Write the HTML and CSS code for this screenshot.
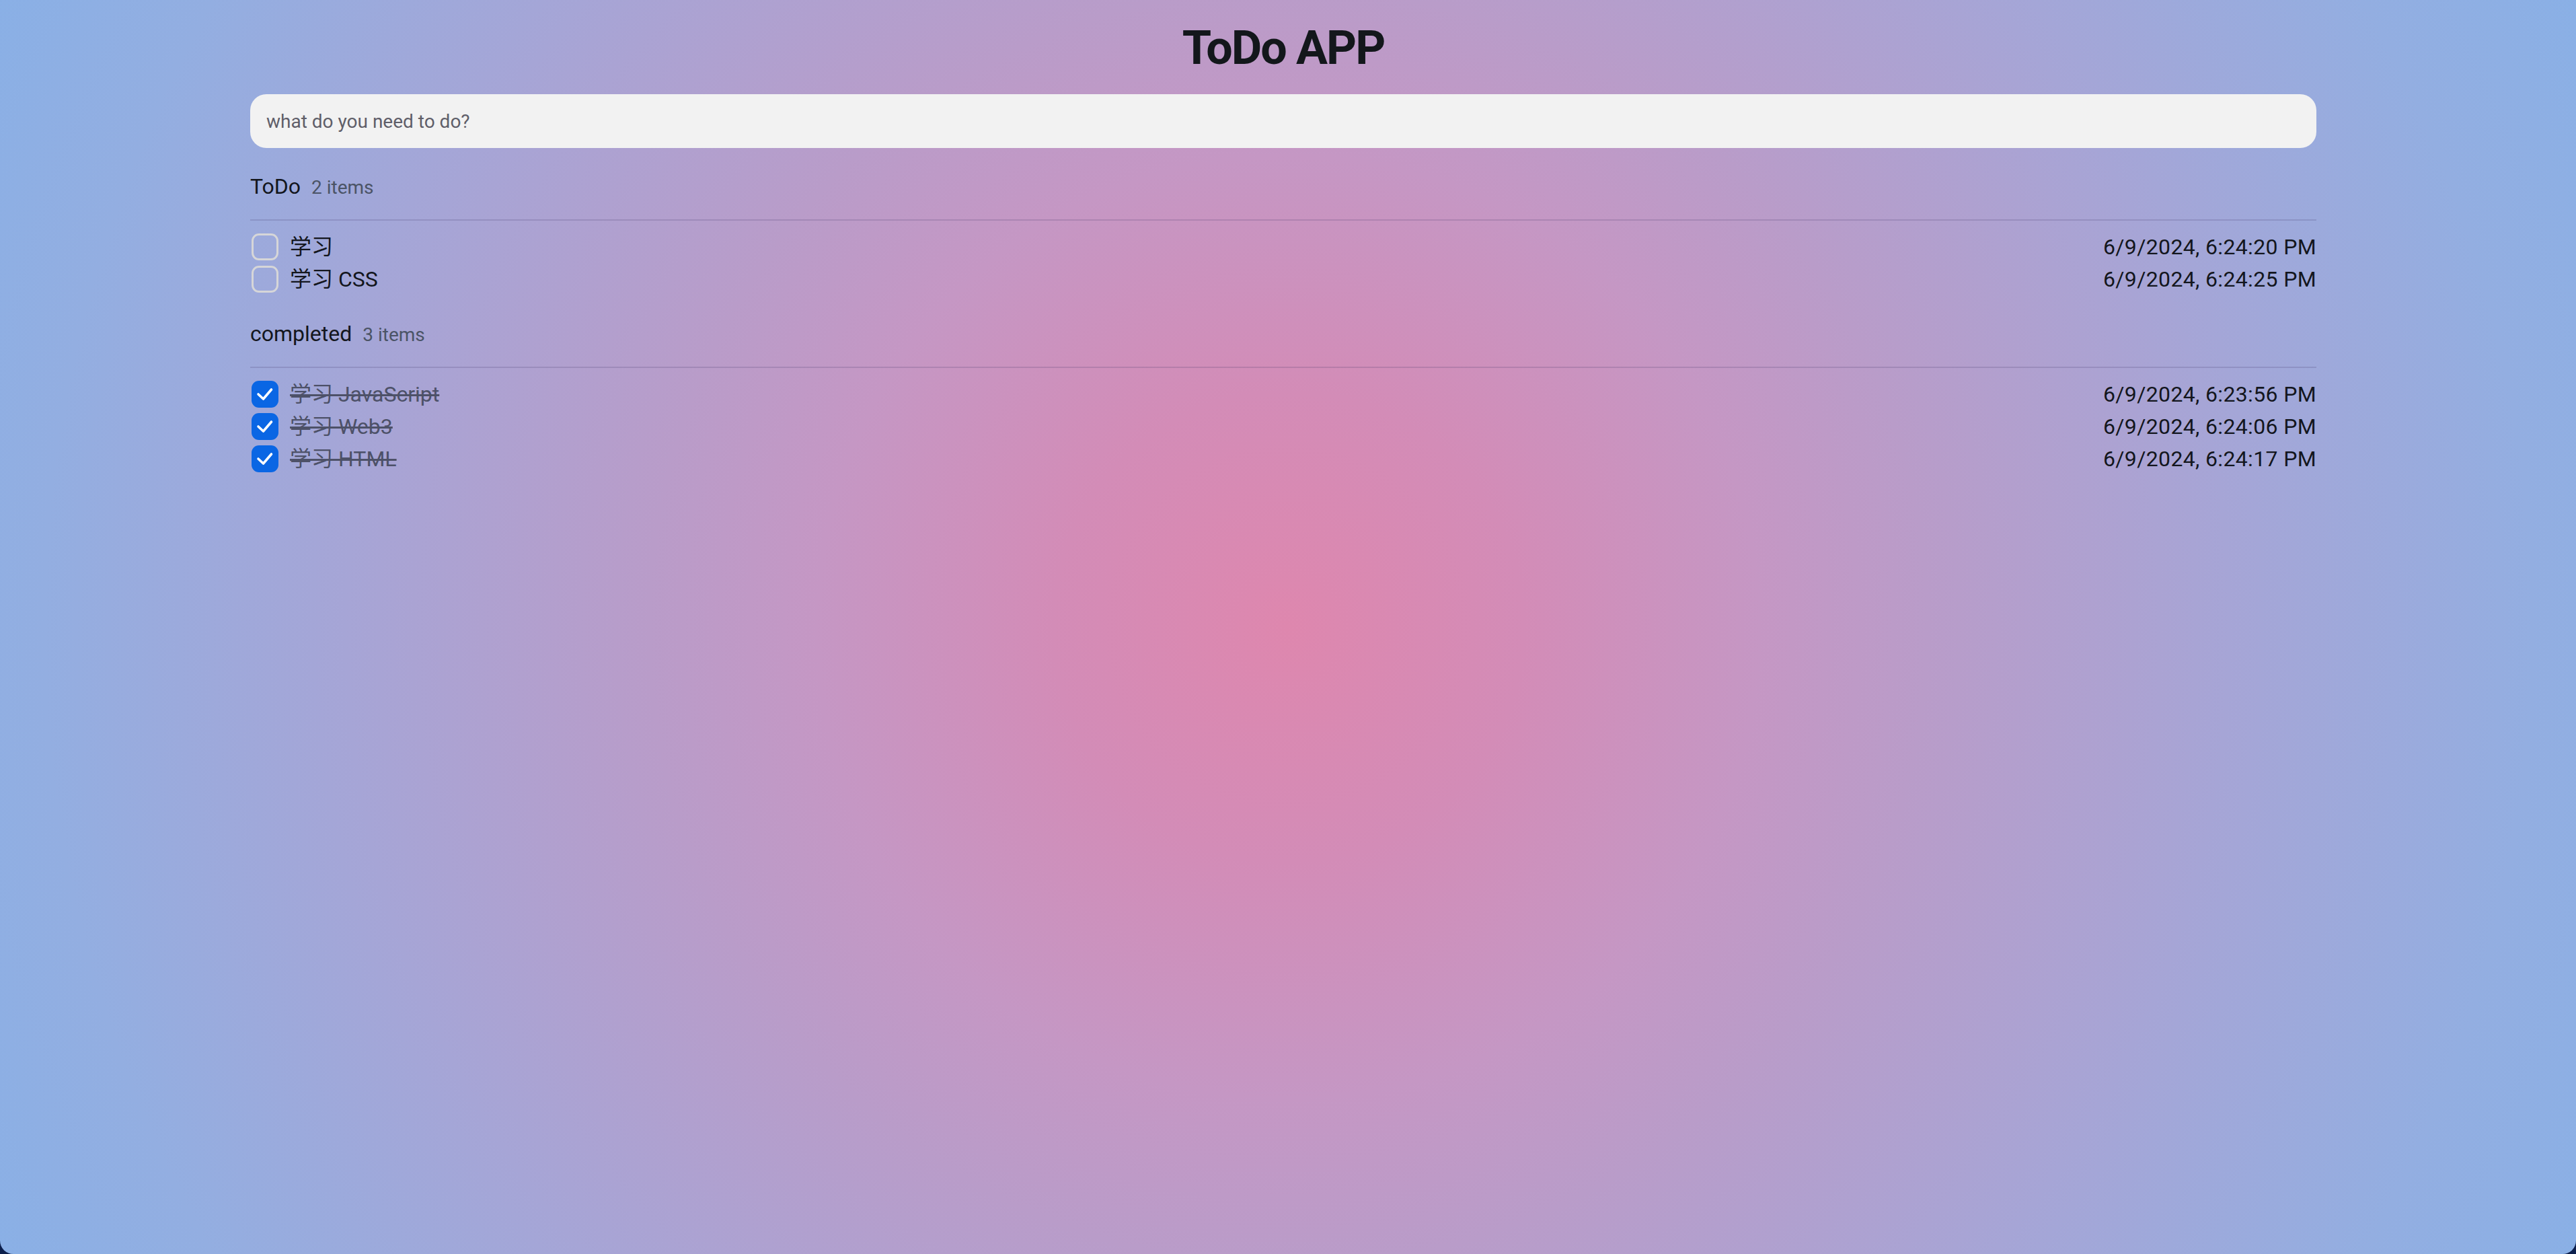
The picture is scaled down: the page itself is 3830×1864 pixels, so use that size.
FILE: index.html
```html
<!DOCTYPE html>
<html lang="zh">
<head>
<meta charset="utf-8">
<title>ToDo APP</title>
<link rel="stylesheet" href="styles.css">
</head>
<body>
<div class="app">
  <main class="container">
    <h1 class="title">ToDo APP</h1>
    <input class="new-todo" type="text" placeholder="what do you need to do?">

    <section class="group">
      <header class="group-head">
        <span class="group-name">ToDo</span>
        <span class="group-count">2 items</span>
      </header>
      <ul class="list">
        <li class="item">
          <span class="check"></span>
          <span class="label">学习</span>
          <span class="time">6/9/2024, 6:24:20 PM</span>
        </li>
        <li class="item">
          <span class="check"></span>
          <span class="label">学习 CSS</span>
          <span class="time">6/9/2024, 6:24:25 PM</span>
        </li>
      </ul>
    </section>

    <section class="group">
      <header class="group-head">
        <span class="group-name">completed</span>
        <span class="group-count">3 items</span>
      </header>
      <ul class="list">
        <li class="item done">
          <span class="check checked"><svg viewBox="0 0 40 40"><path d="M10 20 L17.5 27 L29.5 13"/></svg></span>
          <span class="label">学习 JavaScript</span>
          <span class="time">6/9/2024, 6:23:56 PM</span>
        </li>
        <li class="item done">
          <span class="check checked"><svg viewBox="0 0 40 40"><path d="M10 20 L17.5 27 L29.5 13"/></svg></span>
          <span class="label">学习 Web3</span>
          <span class="time">6/9/2024, 6:24:06 PM</span>
        </li>
        <li class="item done">
          <span class="check checked"><svg viewBox="0 0 40 40"><path d="M10 20 L17.5 27 L29.5 13"/></svg></span>
          <span class="label">学习 HTML</span>
          <span class="time">6/9/2024, 6:24:17 PM</span>
        </li>
      </ul>
    </section>
  </main>
</div>
</body>
</html>
```

FILE: styles.css
```css
html {
  background: #0c1f4c;
}

body {
  margin: 0;
  font-family: Roboto, "Noto Sans CJK SC", sans-serif;
  color: #14171c;
}

.app {
  min-height: 100vh;
  box-sizing: border-box;
  padding: 0 386px 0 372px;
  border-radius: 0 0 20px 20px;
  background: radial-gradient(circle at 50% 50%,
    #de87ae 0px,
    #d38cb7 350px,
    #c597c4 700px,
    #b99cc9 950px,
    #a6a5d6 1400px,
    #93aee1 1850px,
    #89b0e6 2150px);
}

.container {
  display: flex;
  flex-direction: column;
}

.title {
  margin: 36px 0 0;
  font-family: Roboto, sans-serif;
  font-weight: 700;
  font-size: 70px;
  line-height: 70px;
  text-align: center;
  color: #13171b;
  letter-spacing: -2px;
}

.new-todo {
  margin-top: 34px;
  height: 80px;
  box-sizing: border-box;
  border: none;
  outline: none;
  border-radius: 24px;
  background: #f2f2f2;
  padding: 0 24px;
  font-family: Roboto, "Noto Sans CJK SC", sans-serif;
  font-size: 28px;
  color: #222;
}

.new-todo::placeholder {
  color: #5f5e69;
}

.group {
  margin-top: 33px;
}

.group-head {
  display: flex;
  align-items: baseline;
  gap: 16px;
  line-height: 48px;
  padding-bottom: 23px;
  border-bottom: 2px solid rgba(60, 50, 100, 0.18);
}

.group-name {
  font-size: 32px;
  color: #13161d;
}

.group-count {
  font-size: 28px;
  color: #4b5466;
}

.list {
  list-style: none;
  margin: 0;
  padding: 15px 0 0;
}

.item {
  display: flex;
  align-items: center;
  height: 48px;
  font-size: 32px;
  line-height: 48px;
}

.check {
  flex: none;
  width: 40px;
  height: 40px;
  box-sizing: border-box;
  border: 3px solid #d6d6d8;
  border-radius: 11px;
  margin-left: 2px;
}

.check.checked {
  border: none;
  background: #0a66e4;
}

.check svg {
  display: block;
  width: 40px;
  height: 40px;
  fill: none;
  stroke: #ffffff;
  stroke-width: 3.6;
  stroke-linecap: round;
  stroke-linejoin: round;
}

.label {
  margin-left: 17px;
  flex: 1;
  color: #13161d;
}

.done .label {
  color: #4d5168;
  text-decoration: line-through;
  text-decoration-thickness: 3px;
}

.time {
  color: #13161d;
  text-align: right;
  letter-spacing: 0.35px;
}
```
